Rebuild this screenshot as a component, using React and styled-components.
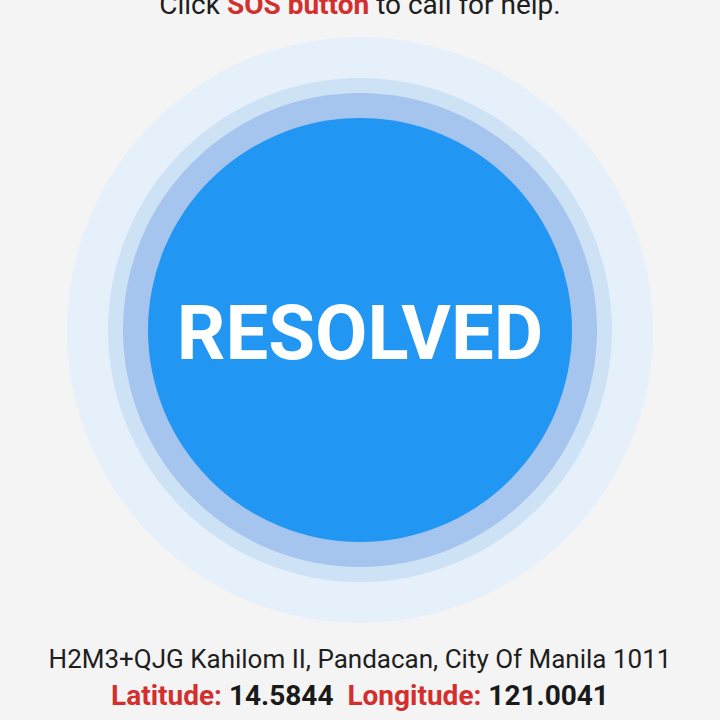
import React from "react";
import styled, { createGlobalStyle } from "styled-components";

const Global = createGlobalStyle`
  html, body { margin: 0; padding: 0; background: #f4f4f4; }
  body { font-family: Roboto, "Noto Sans", sans-serif; overflow: hidden; }
`;

const Page = styled.div`
  width: 720px;
  height: 720px;
  display: flex;
  flex-direction: column;
  align-items: center;
  overflow: hidden;
`;

const Instruction = styled.p`
  margin: -11px 0 0;
  font-size: 28px;
  line-height: 32px;
  color: #1e1e1e;
  text-align: center;
  white-space: nowrap;
`;

const Red = styled.span`
  color: #d32f2f;
  font-weight: 700;
`;

const Ring = styled.div`
  width: ${(p) => p.$size}px;
  height: ${(p) => p.$size}px;
  border-radius: 50%;
  background: ${(p) => p.$color};
  display: flex;
  align-items: center;
  justify-content: center;
  flex-shrink: 0;
`;

const Halo = styled(Ring)`
  margin-top: 16px;
`;

const SosButton = styled.button`
  width: 424px;
  height: 424px;
  border-radius: 50%;
  border: none;
  padding: 5px 0 0;
  background: #2196f3;
  color: #ffffff;
  font-family: Roboto, "Noto Sans", sans-serif;
  font-weight: 700;
  font-size: 76px;
  display: flex;
  align-items: center;
  justify-content: center;
`;

const Address = styled.p`
  margin: 21px 0 0;
  font-size: 26px;
  line-height: 30px;
  color: #1e1e1e;
  text-align: center;
  white-space: nowrap;
`;

const Coords = styled.p`
  margin: 6px 0 0;
  font-size: 28px;
  line-height: 32px;
  font-weight: 700;
  color: #1a1a1a;
  text-align: center;
  white-space: pre;
`;

export default function App() {
  return (
    <>
      <Global />
      <Page>
        <Instruction>
          Click <Red>SOS button</Red> to call for help.
        </Instruction>
        <Halo $size={586} $color="#e6f0fb">
          <Ring $size={504} $color="#cde2f4">
            <Ring $size={474} $color="#a5c4ee">
              <SosButton>RESOLVED</SosButton>
            </Ring>
          </Ring>
        </Halo>
        <Address>H2M3+QJG Kahilom II, Pandacan, City Of Manila 1011</Address>
        <Coords>
          <Red>Latitude:</Red> 14.5844{"  "}<Red>Longitude:</Red> 121.0041
        </Coords>
      </Page>
    </>
  );
}
